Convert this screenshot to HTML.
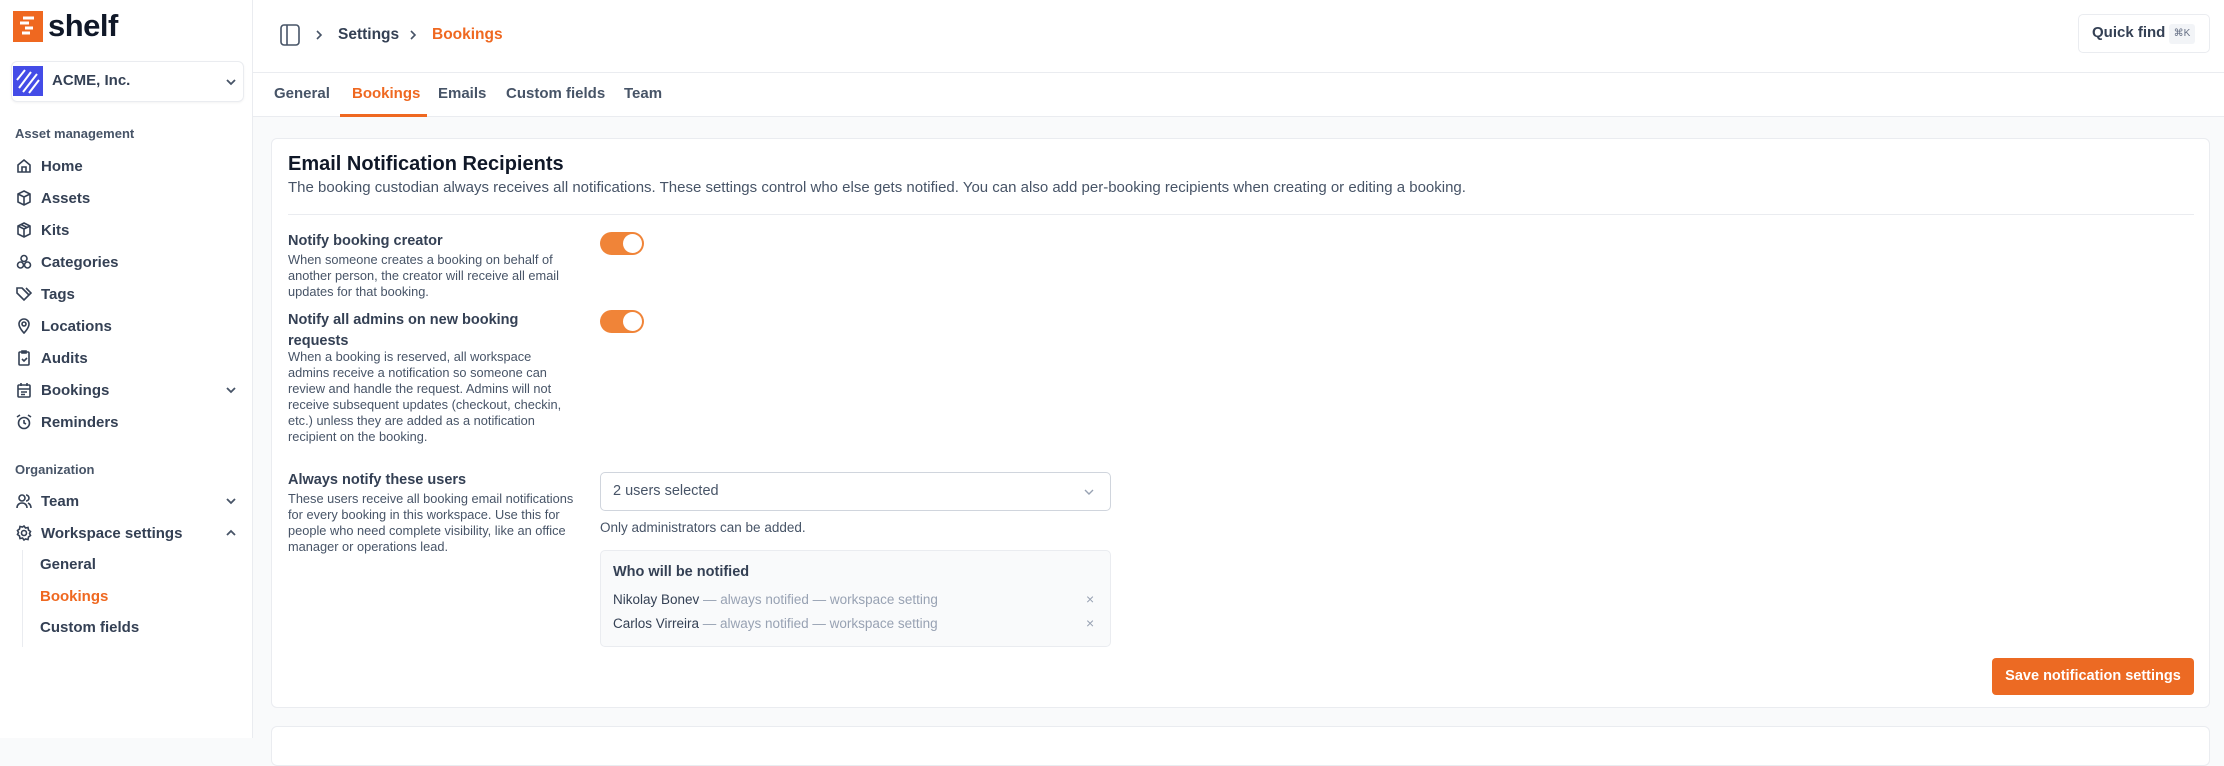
<!DOCTYPE html>
<html><head><meta charset="utf-8"><style>
*{box-sizing:border-box;margin:0;padding:0}
body{width:2224px;height:738px;overflow:hidden;font-family:"Liberation Sans",sans-serif;background:#f9fafb;color:#101828;position:relative}
.abs{position:absolute}
.side{left:0;top:0;width:253px;height:738px;background:#fff;border-right:1px solid #eaecf0}
.nav{position:absolute;left:16px;font-size:15px;font-weight:700;color:#344054;display:flex;align-items:center;height:24px}
.nav svg{width:16px;height:16px;margin-right:9px;stroke:#344054;fill:none;stroke-width:1.6}
.sec{position:absolute;left:15px;font-size:13px;font-weight:700;color:#475467}
.chev{position:absolute;left:224px;width:14px;height:14px;stroke:#475467;fill:none;stroke-width:1.8}
.main{left:253px;top:0;width:1971px;height:738px}
.t{position:absolute;white-space:nowrap}
.lbl{font-size:14.5px;font-weight:700;color:#344054}
.desc{font-size:12.8px;color:#475467;line-height:16px;width:282px;white-space:normal}
.tog{position:absolute;width:44px;height:23px;border-radius:12px;background:#f08438}
.tog::after{content:"";position:absolute;right:2px;top:2px;width:19px;height:19px;border-radius:50%;background:#fff}
</style></head><body>
<div class="abs side">
  <div class="abs" style="left:13px;top:11px;width:30px;height:31px;background:#ef6820"></div>
  <svg class="abs" style="left:13px;top:11px" width="30" height="31"><g stroke="#fff" stroke-width="3" fill="none"><path d="M10 7h11M7 12h9M12 17h8M9 22h8"/></g></svg>
  <div class="t" style="left:48px;top:8px;font-size:31px;font-weight:700;color:#101828;letter-spacing:-0.5px">shelf</div>
  <div class="abs" style="left:11px;top:61px;width:233px;height:41px;border:1px solid #eaecf0;border-radius:6px;box-shadow:0 1px 2px rgba(0,0,0,.05)"></div>
  <div class="abs" style="left:13px;top:66px;width:30px;height:30px;background:#444ce7"></div>
  <svg class="abs" style="left:13px;top:66px" width="30" height="30"><g stroke="#fff" stroke-width="2"><path d="M4 14L12 4M6 22L18 6M10 26L24 8M16 27L26 14"/></g></svg>
  <div class="t" style="left:52px;top:72px;font-size:15px;font-weight:700;color:#344054">ACME, Inc.</div>
  <svg class="chev" style="top:75px" viewBox="0 0 14 14"><path d="M3 5l4 4 4-4"/></svg>
  <div class="sec" style="top:126px">Asset management</div>
  <div class="nav" style="top:154px"><svg viewBox="0 0 16 16"><path d="M2 7l6-5 6 5v7H2z M6 14v-5h4v5"/></svg>Home</div>
  <div class="nav" style="top:186px"><svg viewBox="0 0 16 16"><path d="M8 1l6 3v8l-6 3-6-3V4z M2 4l6 3 6-3 M8 7v8"/></svg>Assets</div>
  <div class="nav" style="top:218px"><svg viewBox="0 0 16 16"><path d="M8 1l6 3v8l-6 3-6-3V4z M2 4l6 3 6-3 M8 7v8 M5 2.5l6 3"/></svg>Kits</div>
  <div class="nav" style="top:250px"><svg viewBox="0 0 16 16"><circle cx="8" cy="4.5" r="3"/><circle cx="4.5" cy="11" r="3"/><circle cx="11.5" cy="11" r="3"/></svg>Categories</div>
  <div class="nav" style="top:282px"><svg viewBox="0 0 16 16"><path d="M1 2v5l7 7 5-5-7-7z M6 2l7 7 2-2-5-5"/></svg>Tags</div>
  <div class="nav" style="top:314px"><svg viewBox="0 0 16 16"><path d="M8 15s5-5 5-9a5 5 0 00-10 0c0 4 5 9 5 9z"/><circle cx="8" cy="6" r="2"/></svg>Locations</div>
  <div class="nav" style="top:346px"><svg viewBox="0 0 16 16"><rect x="3" y="2" width="10" height="13" rx="1"/><path d="M6 1h4v2H6z M6 9l2 2 3-3"/></svg>Audits</div>
  <div class="nav" style="top:378px"><svg viewBox="0 0 16 16"><rect x="2" y="3" width="12" height="12" rx="1"/><path d="M2 7h12 M5 1v3 M11 1v3 M5 10h6 M5 12.5h4"/></svg>Bookings</div>
  <svg class="chev" style="top:383px" viewBox="0 0 14 14"><path d="M3 5l4 4 4-4"/></svg>
  <div class="nav" style="top:410px"><svg viewBox="0 0 16 16"><circle cx="8" cy="9" r="5.5"/><path d="M8 6v3l2 1 M1 3l3-2 M15 3l-3-2"/></svg>Reminders</div>
  <div class="sec" style="top:462px">Organization</div>
  <div class="nav" style="top:489px"><svg viewBox="0 0 16 16"><circle cx="6" cy="5" r="3"/><path d="M1 15c0-3 2-5 5-5s5 2 5 5 M10 2a3 3 0 010 6 M12 10c2 1 3 3 3 5"/></svg>Team</div>
  <svg class="chev" style="top:494px" viewBox="0 0 14 14"><path d="M3 5l4 4 4-4"/></svg>
  <div class="nav" style="top:521px"><svg viewBox="0 0 16 16"><circle cx="8" cy="8" r="2.5"/><path d="M8 1l1.5 2 2.5-.5.5 2.5 2 1.5-1 2 1 2-2 1.5-.5 2.5-2.5-.5L8 15l-1.5-2-2.5.5-.5-2.5-2-1.5 1-2-1-2 2-1.5.5-2.5 2.5.5z"/></svg>Workspace settings</div>
  <svg class="chev" style="top:526px" viewBox="0 0 14 14"><path d="M3 9l4-4 4 4"/></svg>
  <div class="abs" style="left:22px;top:550px;width:1px;height:97px;background:#eaecf0"></div>
  <div class="t" style="left:40px;top:556px;font-size:15px;font-weight:700;color:#344054">General</div>
  <div class="t" style="left:40px;top:588px;font-size:15px;font-weight:700;color:#ef6820">Bookings</div>
  <div class="t" style="left:40px;top:619px;font-size:15px;font-weight:700;color:#344054">Custom fields</div>
</div>
<div class="abs main">
  <div class="abs" style="left:0;top:0;width:1971px;height:117px;background:#fff;border-bottom:1px solid #eaecf0"></div>
  <div class="abs" style="left:0;top:72px;width:1971px;height:1px;background:#eaecf0"></div>
  <svg class="abs" style="left:27px;top:24px" width="20" height="22" viewBox="0 0 20 22" fill="none" stroke="#475467" stroke-width="1.6"><rect x="1" y="1" width="18" height="20" rx="3"/><path d="M7 1v20"/></svg>
  <svg class="abs" style="left:60px;top:29px" width="12" height="12" fill="none" stroke="#475467" stroke-width="1.6"><path d="M4 2l4 4-4 4"/></svg>
  <div class="t" style="left:85px;top:26px;font-size:15.5px;font-weight:700;color:#344054">Settings</div>
  <svg class="abs" style="left:154px;top:29px" width="12" height="12" fill="none" stroke="#475467" stroke-width="1.6"><path d="M4 2l4 4-4 4"/></svg>
  <div class="t" style="left:179px;top:26px;font-size:15.5px;font-weight:700;color:#ef6820">Bookings</div>
  <div class="abs" style="left:1825px;top:14px;width:132px;height:39px;border:1px solid #eaecf0;border-radius:5px;background:#fff"></div>
  <div class="t" style="left:1839px;top:24px;font-size:15px;font-weight:700;color:#344054">Quick find</div>
  <div class="abs" style="left:1916px;top:24px;width:26px;height:20px;border-radius:3px;background:#f2f4f7;font-size:10px;color:#667085;text-align:center;line-height:20px">⌘K</div>
  <div class="t" style="left:21px;top:85px;font-size:15px;font-weight:700;color:#475467">General</div>
  <div class="t" style="left:99px;top:85px;font-size:15px;font-weight:700;color:#ef6820">Bookings</div>
  <div class="abs" style="left:87px;top:114px;width:87px;height:3px;background:#ef6820"></div>
  <div class="t" style="left:185px;top:85px;font-size:15px;font-weight:700;color:#475467">Emails</div>
  <div class="t" style="left:253px;top:85px;font-size:15px;font-weight:700;color:#475467">Custom fields</div>
  <div class="t" style="left:371px;top:85px;font-size:15px;font-weight:700;color:#475467">Team</div>

  <div class="abs" style="left:18px;top:138px;width:1939px;height:570px;background:#fff;border:1px solid #eaecf0;border-radius:6px"></div>
  <div class="abs" style="left:18px;top:726px;width:1939px;height:40px;background:#fff;border:1px solid #eaecf0;border-radius:6px"></div>
  <div class="t" style="left:35px;top:153px;font-size:20px;font-weight:700;color:#101828">Email Notification Recipients</div>
  <div class="t" style="left:35px;top:179px;font-size:15px;color:#475467">The booking custodian always receives all notifications. These settings control who else gets notified. You can also add per-booking recipients when creating or editing a booking.</div>
  <div class="abs" style="left:35px;top:214px;width:1906px;height:1px;background:#eaecf0"></div>

  <div class="t lbl" style="left:35px;top:233px">Notify booking creator</div>
  <div class="t desc" style="left:35px;top:252px">When someone creates a booking on behalf of another person, the creator will receive all email updates for that booking.</div>
  <div class="tog" style="left:347px;top:232px"></div>

  <div class="t lbl" style="left:35px;top:310px;width:270px;white-space:normal;line-height:21px">Notify all admins on new booking requests</div>
  <div class="t desc" style="left:35px;top:349px">When a booking is reserved, all workspace admins receive a notification so someone can review and handle the request. Admins will not receive subsequent updates (checkout, checkin, etc.) unless they are added as a notification recipient on the booking.</div>
  <div class="tog" style="left:347px;top:310px"></div>

  <div class="t lbl" style="left:35px;top:472px">Always notify these users</div>
  <div class="t desc" style="left:35px;top:491px;width:290px">These users receive all booking email notifications for every booking in this workspace. Use this for people who need complete visibility, like an office manager or operations lead.</div>

  <div class="abs" style="left:347px;top:472px;width:511px;height:39px;border:1px solid #d0d5dd;border-radius:5px"></div>
  <div class="t" style="left:360px;top:483px;font-size:14.5px;color:#475467">2 users selected</div>
  <svg class="abs" style="left:830px;top:486px" width="12" height="12" fill="none" stroke="#98a2b3" stroke-width="1.4"><path d="M2 4l4 4 4-4"/></svg>
  <div class="t" style="left:347px;top:520px;font-size:13.5px;color:#475467">Only administrators can be added.</div>
  <div class="abs" style="left:347px;top:550px;width:511px;height:97px;border:1px solid #eaecf0;border-radius:5px;background:#f9fafb"></div>
  <div class="t" style="left:360px;top:564px;font-size:14.5px;font-weight:700;color:#344054">Who will be notified</div>
  <div class="t" style="left:360px;top:592px;font-size:13.5px;color:#98a2b3"><span style="color:#344054">Nikolay Bonev</span> — always notified — workspace setting</div>
  <div class="t" style="left:360px;top:616px;font-size:13.5px;color:#98a2b3"><span style="color:#344054">Carlos Virreira</span> — always notified — workspace setting</div>
  <div class="t" style="left:833px;top:591px;font-size:14px;color:#98a2b3">×</div>
  <div class="t" style="left:833px;top:615px;font-size:14px;color:#98a2b3">×</div>

  <div class="abs" style="left:1739px;top:658px;width:202px;height:37px;border-radius:4px;background:#ec6a23;color:#fff;font-size:14.5px;font-weight:700;text-align:center;line-height:37px">Save notification settings</div>
</div>
</body></html>
